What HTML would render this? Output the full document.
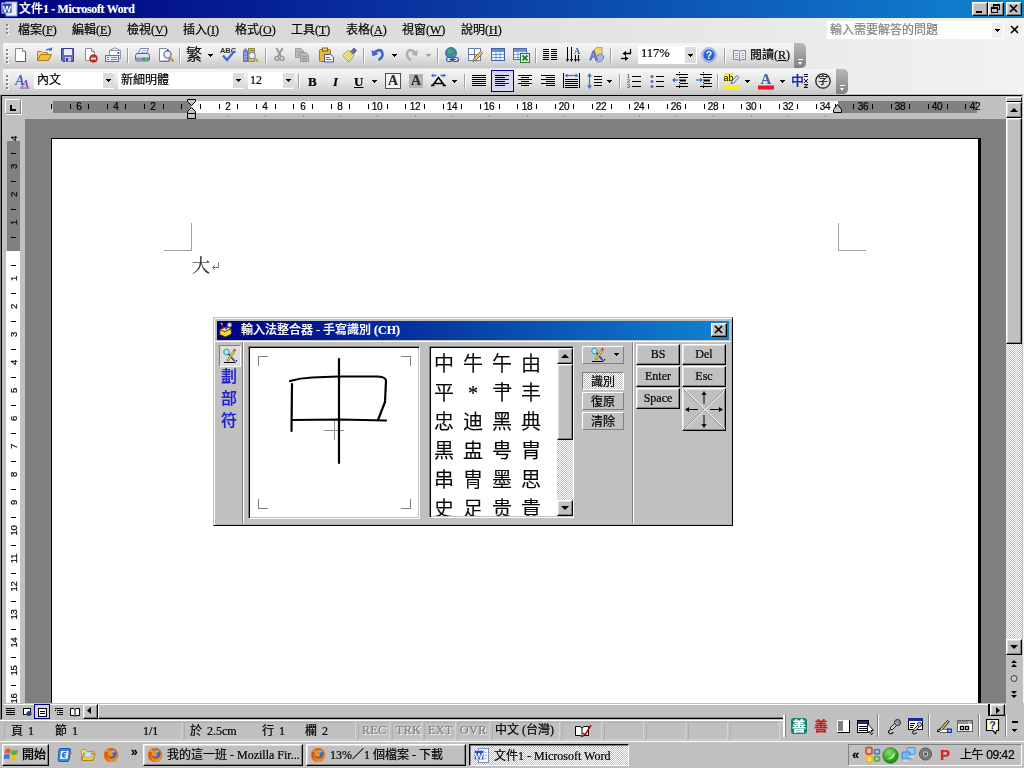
<!DOCTYPE html><html><head><meta charset="utf-8"><title>文件1 - Microsoft Word</title><style>
*{box-sizing:border-box}
html,body{margin:0;padding:0}
body{width:1024px;height:768px;position:relative;overflow:hidden;background:#c0c0c0;font-family:'Liberation Serif','Noto Sans CJK SC',sans-serif;font-size:12px;color:#000;line-height:1}
#root{position:absolute;left:0;top:0;width:1024px;height:768px;overflow:hidden;will-change:transform}
.a{position:absolute}
.t{position:absolute;white-space:nowrap;line-height:1;-webkit-text-stroke-width:0.2px}
.raised{position:absolute;background:#c0c0c0;border:1px solid;border-color:#fff #000 #000 #fff;box-shadow:inset -1px -1px 0 #808080,inset 1px 1px 0 #dfdfdf}
.sunk{position:absolute;border:1px solid;border-color:#808080 #fff #fff #808080}
.sep{position:absolute;width:2px;border-left:1px solid #a0a0a0;border-right:1px solid #fff}
.arr{position:absolute;width:0;height:0;border-left:2.5px solid transparent;border-right:2.5px solid transparent;border-top:3px solid #000}
svg{position:absolute;overflow:visible}
.dd{position:absolute;width:5px;height:1px;background:#000}
.dd::before{content:'';position:absolute;left:1px;top:1px;width:3px;height:1px;background:inherit}
.dd::after{content:'';position:absolute;left:2px;top:2px;width:1px;height:1px;background:inherit}
</style></head><body><div id="root">
<div class="a" style="left:0;top:0;width:1024px;height:18px;background:linear-gradient(90deg,#000080 0%,#0a3aa4 45%,#1084d0 100%)"></div>
<svg style="left:2px;top:1px" width="16" height="16"><rect x="4" y="1" width="11" height="14" fill="#e8eefc" stroke="#7f9ad8"/><rect x="0" y="2" width="10" height="10" fill="#2a4db0" stroke="#c8d4f4"/><text x="5" y="10.5" font-size="9" font-weight="bold" fill="#fff" text-anchor="middle" font-family="Liberation Sans,sans-serif">W</text></svg>
<div class="t" style="left:19px;top:3px;color:#fff;font-weight:bold;font-size:12px;letter-spacing:-0.35px"><span style="font-weight:500;letter-spacing:0">文件</span>1 - Microsoft Word</div>
<div class="raised" style="left:972px;top:2px;width:16px;height:14px"></div>
<svg style="left:972px;top:2px" width="16" height="14"><rect x="4" y="9" width="6" height="2" fill="#000"/></svg>
<div class="raised" style="left:988px;top:2px;width:16px;height:14px"></div>
<svg style="left:988px;top:2px" width="16" height="14"><rect x="5.5" y="2.5" width="6" height="5" fill="none" stroke="#000"/><rect x="5" y="2" width="7" height="2" fill="#000"/><rect x="3.5" y="5.5" width="6" height="5" fill="#c0c0c0" stroke="#000"/><rect x="3" y="5" width="7" height="2" fill="#000"/></svg>
<div class="raised" style="left:1006px;top:2px;width:16px;height:14px"></div>
<svg style="left:1006px;top:2px" width="16" height="14"><path d="M4 3 L11 10 M11 3 L4 10" stroke="#000" stroke-width="1.7"/></svg>
<div class="a" style="left:0;top:18px;width:1024px;height:25px;background:linear-gradient(90deg,#d0d0d0 0%,#e4e4e4 60%,#f2f2f2 100%)"></div>
<div class="a" style="left:7px;top:25px;width:2px;height:2px;background:#fff"></div>
<div class="a" style="left:6px;top:24px;width:2px;height:2px;background:#888"></div>
<div class="a" style="left:7px;top:29px;width:2px;height:2px;background:#fff"></div>
<div class="a" style="left:6px;top:28px;width:2px;height:2px;background:#888"></div>
<div class="a" style="left:7px;top:33px;width:2px;height:2px;background:#fff"></div>
<div class="a" style="left:6px;top:32px;width:2px;height:2px;background:#888"></div>
<div class="t" style="left:18px;top:24px;font-size:12px">檔案(<u>F</u>)</div>
<div class="t" style="left:72px;top:24px;font-size:12px">編輯(<u>E</u>)</div>
<div class="t" style="left:127px;top:24px;font-size:12px">檢視(<u>V</u>)</div>
<div class="t" style="left:183px;top:24px;font-size:12px">插入(<u>I</u>)</div>
<div class="t" style="left:235px;top:24px;font-size:12px">格式(<u>O</u>)</div>
<div class="t" style="left:291px;top:24px;font-size:12px">工具(<u>T</u>)</div>
<div class="t" style="left:346px;top:24px;font-size:12px">表格(<u>A</u>)</div>
<div class="t" style="left:402px;top:24px;font-size:12px">視窗(<u>W</u>)</div>
<div class="t" style="left:461px;top:24px;font-size:12px">說明(<u>H</u>)</div>
<div class="a" style="left:827px;top:21px;width:177px;height:18px;background:#fff"></div>
<div class="t" style="left:830px;top:24px;color:#808080;font-size:12px">輸入需要解答的問題</div>
<div class="a" style="left:992px;top:22px;width:11px;height:16px;background:#f0f0f0"></div>
<div class="dd" style="left:995px;top:29px"></div>
<svg style="left:1010px;top:25px" width="10" height="10"><path d="M1 1 L8 8 M8 1 L1 8" stroke="#000" stroke-width="1.6"/></svg>
<div class="a" style="left:0;top:43px;width:1024px;height:26px;background:linear-gradient(90deg,#d0d0d0 0%,#e4e4e4 60%,#f2f2f2 100%)"></div>
<div class="a" style="left:3px;top:43px;width:803px;height:25px;border-radius:0 4px 4px 0;background:linear-gradient(180deg,#f6f6f6 0%,#e6e6e6 50%,#c8c8c8 100%)"></div>
<div class="a" style="left:794px;top:43px;width:12px;height:25px;border-radius:0 5px 5px 0;background:linear-gradient(180deg,#b8b8b8,#808080)"></div>
<div class="a" style="left:798px;top:59px;width:5px;height:1px;background:#fff"></div>
<div class="arr" style="left:798px;top:62px;border-top-color:#fff;border-width:3px 3px 0 3px;border-left-width:2.5px;border-right-width:2.5px"></div>
<div class="a" style="left:7px;top:50px;width:2px;height:2px;background:#fff"></div>
<div class="a" style="left:6px;top:49px;width:2px;height:2px;background:#888"></div>
<div class="a" style="left:7px;top:54px;width:2px;height:2px;background:#fff"></div>
<div class="a" style="left:6px;top:53px;width:2px;height:2px;background:#888"></div>
<div class="a" style="left:7px;top:58px;width:2px;height:2px;background:#fff"></div>
<div class="a" style="left:6px;top:57px;width:2px;height:2px;background:#888"></div>
<div class="a" style="left:7px;top:62px;width:2px;height:2px;background:#fff"></div>
<div class="a" style="left:6px;top:61px;width:2px;height:2px;background:#888"></div>
<div class="a" style="left:0;top:69px;width:1024px;height:26px;background:linear-gradient(90deg,#d0d0d0 0%,#e4e4e4 60%,#f2f2f2 100%)"></div>
<div class="a" style="left:3px;top:69px;width:845px;height:25px;border-radius:0 4px 4px 0;background:linear-gradient(180deg,#f6f6f6 0%,#e6e6e6 50%,#c8c8c8 100%)"></div>
<div class="a" style="left:836px;top:69px;width:12px;height:25px;border-radius:0 5px 5px 0;background:linear-gradient(180deg,#b8b8b8,#808080)"></div>
<div class="a" style="left:840px;top:85px;width:5px;height:1px;background:#fff"></div>
<div class="arr" style="left:840px;top:88px;border-top-color:#fff;border-width:3px 3px 0 3px;border-left-width:2.5px;border-right-width:2.5px"></div>
<div class="a" style="left:7px;top:76px;width:2px;height:2px;background:#fff"></div>
<div class="a" style="left:6px;top:75px;width:2px;height:2px;background:#888"></div>
<div class="a" style="left:7px;top:80px;width:2px;height:2px;background:#fff"></div>
<div class="a" style="left:6px;top:79px;width:2px;height:2px;background:#888"></div>
<div class="a" style="left:7px;top:84px;width:2px;height:2px;background:#fff"></div>
<div class="a" style="left:6px;top:83px;width:2px;height:2px;background:#888"></div>
<div class="a" style="left:7px;top:88px;width:2px;height:2px;background:#fff"></div>
<div class="a" style="left:6px;top:87px;width:2px;height:2px;background:#888"></div>
<div class="a" style="left:0;top:94px;width:1024px;height:2px;background:#c0c0c0"></div>
<svg style="left:13px;top:47px" width="16" height="16"><path d="M2.500 1.500 H9.500 L12.500 4.500 V14.500 H2.500 Z" fill="#fff" stroke="#8c8c9c"/><path d="M9.500 1.500 V4.500 H12.500" fill="#d8dcec" stroke="#8c8c9c"/><path d="M3 14.500 H12.500 V5" fill="none" stroke="#5a5a6a"/></svg>
<svg style="left:36px;top:47px" width="18" height="16"><path d="M1.500 13.500 V4.500 H5.500 L6.500 5.500 H11.500 V7.500" fill="#f4d470" stroke="#b08820"/><path d="M1.500 13.500 L4.500 7.500 H15.500 L12.500 13.500 Z" fill="#f0c040" stroke="#a87c18"/><path d="M10 3.500 Q13 0.500 15.500 3 M15.500 3 L15.500 0.500 M15.500 3 L13 3.200" fill="none" stroke="#3a64c8" stroke-width="1.200"/></svg>
<svg style="left:60px;top:47px" width="16" height="16"><path d="M1.500 1.500 H13.500 V14.500 H3 L1.500 13 Z" fill="#6868c8" stroke="#38389c"/><rect x="4" y="2" width="8" height="6" fill="#e8ecfc"/><rect x="5" y="10" width="6" height="4.500" fill="#c0c4e0"/><rect x="6" y="11" width="2" height="3" fill="#38389c"/></svg>
<svg style="left:83px;top:47px" width="16" height="16"><path d="M2.500 1.500 H8.500 L11.500 4.500 V13.500 H2.500 Z" fill="#fff" stroke="#8c8c9c"/><path d="M8.500 1.500 V4.500 H11.500" fill="#d8dcec" stroke="#8c8c9c"/><circle cx="10.500" cy="11.500" r="3.800" fill="#d83018" stroke="#a01808" stroke-width="0.800"/><rect x="8" y="10.700" width="5" height="1.700" fill="#fff"/></svg>
<svg style="left:105px;top:47px" width="18" height="16"><path d="M4.500 7 V3.500 L10 0.800 L15.500 3.500 V11.500 H12" fill="#f4f6fc" stroke="#8890b0"/><rect x="4.500" y="3.500" width="11" height="5" fill="#fcfcff" stroke="#9098b8"/><rect x="12.500" y="5" width="1.800" height="1.800" fill="#404868"/><rect x="0.500" y="8.500" width="13" height="6" fill="#e4e8f4" stroke="#6070a0"/><path d="M2 10.500 H4 M2 12.500 H4 M6 10.500 H12 M6 12.500 H12" stroke="#7888c0"/></svg>
<div class="sep" style="left:127px;top:48px;height:15px"></div>
<svg style="left:134px;top:47px" width="17" height="16"><path d="M4 7 L6.500 1.500 H14.500 L12.500 7" fill="#fcfcff" stroke="#7880b0"/><path d="M7.500 3.500 H12.500 M7 5.500 H12" stroke="#a8b0d0"/><path d="M1.500 8.500 Q1.500 6.500 4 6.500 H13 Q15.500 6.500 15.500 8.500 V12.500 Q15.500 14 13.500 14 H3.500 Q1.500 14 1.500 12.500 Z" fill="#dde2ee" stroke="#586890"/><path d="M2 10.500 H15 V12.500 Q15 13.500 13.500 13.500 H3.500 Q2 13.500 2 12.500 Z" fill="#8c98b8"/><rect x="8.500" y="10.800" width="6" height="2.400" rx="0.800" fill="#2c9c48"/><rect x="11.500" y="11.300" width="1.500" height="1.200" fill="#b0f0a0"/></svg>
<svg style="left:158px;top:47px" width="17" height="16"><path d="M1.500 1.500 H8.500 L11.500 4.500 V14.500 H1.500 Z" fill="#fcfcff" stroke="#8088b0"/><path d="M2 14 H11 V5" fill="none" stroke="#5860a0" stroke-width="0.800"/><circle cx="9.500" cy="7.500" r="3.600" fill="#e8f0f8" stroke="#70788c" stroke-width="1.300"/><circle cx="9.800" cy="3.300" r="1" fill="#404860"/><path d="M12 10.500 L15 13.800" stroke="#d09038" stroke-width="2.400" stroke-linecap="round"/></svg>
<div class="sep" style="left:179px;top:48px;height:15px"></div>
<div class="t" style="left:186px;top:47px;font-size:16px;color:#101010">繁</div>
<div class="dd" style="left:208px;top:54px"></div>
<svg style="left:219px;top:46px" width="18" height="17"><text x="9" y="6.500" font-size="7.500" font-weight="bold" text-anchor="middle" font-family="Liberation Sans,sans-serif" fill="#303030">ABC</text><path d="M4 9.500 L8 14 L15.500 5" fill="none" stroke="#3c6cd0" stroke-width="2.400"/></svg>
<svg style="left:243px;top:47px" width="16" height="16"><path d="M0.500 4 L2.500 1.500 L4.500 4 V14.500 H0.500 Z" fill="#8088e0" stroke="#5058b0" stroke-width="0.800"/><path d="M1 6.500 H4 M1 9.500 H4 M1 12 H4" stroke="#a8b0f0"/><rect x="5.500" y="1.500" width="6" height="13" fill="#d0c860" stroke="#807828" stroke-width="0.800"/><path d="M6.500 3.500 H10.500" stroke="#807828"/><circle cx="9" cy="8.500" r="3.200" fill="#f0f4fc" stroke="#8890a8" stroke-width="1.200"/><path d="M11.500 11 L14.500 14" stroke="#c8a050" stroke-width="2.200" stroke-linecap="round"/></svg>
<div class="sep" style="left:265px;top:48px;height:15px"></div>
<svg style="left:274px;top:47px" width="12" height="16"><path d="M2.500 1 L7 9.500 M8.500 1 L4 9.500" stroke="#9c9c9c" stroke-width="2" fill="none"/><circle cx="3" cy="11.500" r="2" fill="none" stroke="#9c9c9c" stroke-width="1.600"/><circle cx="8" cy="11.500" r="2" fill="none" stroke="#9c9c9c" stroke-width="1.600"/></svg>
<svg style="left:294px;top:47px" width="16" height="16"><path d="M1.500 1.500 H7 L9.500 4 V10.500 H1.500 Z" fill="#bcbcbc" stroke="#a0a0a0"/><path d="M3 4.500 H7 M3 6.500 H8 M3 8.500 H6" stroke="#a4a4a4"/><path d="M6.500 5.500 H12 L14.500 8 V14.500 H6.500 Z" fill="#b8b8b8" stroke="#9c9c9c"/><path d="M8 9.500 H13 M8 11.500 H13 M8 13 H13" stroke="#9a9a9a"/></svg>
<svg style="left:318px;top:47px" width="17" height="16"><rect x="1.500" y="2.500" width="11" height="12" rx="1" fill="#ecb838" stroke="#a87818"/><rect x="4.500" y="1" width="5" height="3" fill="#e8d890" stroke="#806010"/><path d="M6.500 7.500 H12.500 L15.500 10 V15 H6.500 Z" fill="#f8fafc" stroke="#4858a0"/><path d="M8 10.500 H12 M8 12.500 H13.500" stroke="#6078c0"/></svg>
<svg style="left:341px;top:47px" width="17" height="16"><path d="M9 5.500 L13 1 L15.500 3.500 L11.500 8 Z" fill="#7068b0" stroke="#484088" stroke-width="0.800"/><path d="M1.500 8.500 L7.500 3 L13 8.500 L8 15 Z" fill="#ece488" stroke="#a09838" stroke-width="0.900"/><path d="M3.500 10.500 L9.500 5 M5.500 12.500 L11 7" stroke="#c8bc58" stroke-width="0.800"/></svg>
<div class="sep" style="left:363px;top:48px;height:15px"></div>
<svg style="left:371px;top:47px" width="14" height="16"><path d="M3 6 Q10 0 11.500 6.500 Q12 10.500 7.500 13" fill="none" stroke="#3a68d8" stroke-width="2.600"/><path d="M0.500 3 L1.500 9.500 L7.500 7 Z" fill="#3a68d8"/></svg>
<div class="dd" style="left:392px;top:54px"></div>
<svg style="left:405px;top:47px" width="14" height="16"><path d="M10.500 6 Q3.500 0 2 6.500 Q1.500 10.500 6 13" fill="none" stroke="#b0b0b0" stroke-width="2.600"/><path d="M13 3 L12 9.500 L6 7 Z" fill="#b0b0b0"/></svg>
<div class="dd" style="left:426px;top:54px;background:#a0a0a0"></div>
<div class="sep" style="left:437px;top:48px;height:15px"></div>
<svg style="left:444px;top:47px" width="17" height="16"><circle cx="7" cy="6" r="5.500" fill="#3c88b8" stroke="#28608c" stroke-width="0.800"/><path d="M3 4 Q5 1 8 2.500 Q9 5 6.500 6.500 Q4 8 3 4 Z M8 8 Q10 6 11.500 8 Q10 10.500 8 8 Z" fill="#48b060"/><rect x="2.500" y="10.500" width="6" height="4" rx="2" fill="#e8f0fc" stroke="#3858a0" stroke-width="1.200"/><rect x="8.500" y="10.500" width="6" height="4" rx="2" fill="#e8f0fc" stroke="#3858a0" stroke-width="1.200"/><path d="M5.500 12.500 H11.500" stroke="#203878" stroke-width="1.400"/></svg>
<svg style="left:467px;top:47px" width="17" height="16"><rect x="1.500" y="1.500" width="12" height="12" fill="#fff" stroke="#6878b0"/><path d="M1.500 7.500 H13.500 M7.500 1.500 V13.500" stroke="#6878b0"/><path d="M6 14.500 L7 11 L13.500 4.500 L15.500 6.500 L9 13 Z" fill="#ecc050" stroke="#906820"/></svg>
<svg style="left:491px;top:47px" width="16" height="16"><rect x="0.500" y="1.500" width="13" height="12" fill="#f4f8ff" stroke="#4060a8"/><rect x="1" y="2" width="12" height="2" fill="#5c8cdc"/><path d="M1 4.500 H13 M1 7.500 H13 M1 10.500 H13 M5 4.500 V13 M9 4.500 V13" stroke="#6c94d8"/></svg>
<svg style="left:513px;top:47px" width="18" height="17"><rect x="0.500" y="1.500" width="13" height="11" fill="#f4f8ff" stroke="#5070b0"/><rect x="1" y="2" width="12" height="2" fill="#6890d8"/><path d="M1 4.500 H13 M1 7.500 H13 M1 10.500 H13 M5 4.500 V12 M9 4.500 V12" stroke="#7c9cd8"/><rect x="7.500" y="6.500" width="9" height="9" fill="#e4f0e0" stroke="#2c7838"/><path d="M9.500 8.500 L14.500 13.500 M14.500 8.500 L9.500 13.500" stroke="#208030" stroke-width="1.800"/></svg>
<div class="sep" style="left:535px;top:48px;height:15px"></div>
<svg style="left:543px;top:47px" width="14" height="16"><path d="M0 3 H6 M0 5 H6 M0 7 H6 M0 9 H6 M0 11 H6 M0 13 H6 M8 3 H14 M8 5 H14 M8 7 H14 M8 9 H14 M8 11 H14 M8 13 H14" stroke="#000" stroke-width="1" transform="translate(0,-0.500)"/></svg>
<svg style="left:565px;top:47px" width="16" height="16"><path d="M2.500 0 V13 M6.500 0 V13 M10.500 8 V13 M13.500 8 V13" stroke="#000" stroke-width="1"/><path d="M1 12 H4 L2.500 15 Z M5 12 H8 L6.500 15 Z M9 12 H12 L10.500 15 Z M12 12 H15 L13.500 15 Z" fill="#000"/><text x="12" y="7" font-size="8.500" font-weight="bold" text-anchor="middle" font-family="Liberation Serif,serif" fill="#3858b0">A</text></svg>
<svg style="left:588px;top:47px" width="17" height="16"><path d="M6 3 L9 0.500 H14 V7 L11 9.500 H6 Z" fill="#f0d868" stroke="#b89830" stroke-width="0.800"/><ellipse cx="11.500" cy="11" rx="4.500" ry="3.500" fill="#a8b8e0" stroke="#6878b0" stroke-width="0.800" transform="rotate(-30 11.500 11)"/><text x="5.500" y="12.500" font-size="12" font-weight="bold" text-anchor="middle" font-family="Liberation Sans,sans-serif" fill="#7080d0" stroke="#4858a8" stroke-width="0.400">A</text></svg>
<div class="sep" style="left:610px;top:48px;height:15px"></div>
<svg style="left:620px;top:47px" width="14" height="16"><path d="M10.500 2 V6.500 H4" fill="none" stroke="#000" stroke-width="1.300"/><path d="M2.500 6.500 L6 4 V9 Z" fill="#000"/><path d="M1 11.500 H6" fill="none" stroke="#000" stroke-width="1.300"/><path d="M8.500 11.500 L5 9 V14 Z" fill="#000"/></svg>
<div class="a" style="left:638px;top:46px;width:59px;height:18px;background:#fff"></div>
<div class="a" style="left:685px;top:47px;width:11px;height:16px;background:#dcdcdc"></div>
<div class="t" style="left:641px;top:47px;font-size:12.500px">117%</div>
<div class="dd" style="left:688px;top:54px"></div>
<svg style="left:701px;top:47px" width="16" height="16"><circle cx="8" cy="8" r="6.300" fill="#2c64d0" stroke="#e8f0ff" stroke-width="1"/><circle cx="8" cy="8" r="7.200" fill="none" stroke="#5c84d8" stroke-width="0.800"/><text x="8" y="11.800" font-size="10.500" font-weight="bold" text-anchor="middle" font-family="Liberation Sans,sans-serif" fill="#fff">?</text></svg>
<div class="sep" style="left:724px;top:48px;height:15px"></div>
<svg style="left:732px;top:47px" width="16" height="16"><path d="M1.500 3.500 H6 L7.500 4.500 L9 3.500 H13.500 V12.500 H9 L7.500 13.800 L6 12.500 H1.500 Z" fill="#eef0f6" stroke="#8088a0"/><path d="M7.500 4.500 V13.500" stroke="#8088a0"/><path d="M3 6.500 H6 M3 8.500 H6 M3 10.500 H6 M9.500 6.500 H12 M9.500 8.500 H12 M9.500 10.500 H12" stroke="#a0a8c0"/></svg>
<div class="t" style="left:750px;top:49px;font-size:12px">閱讀(<u>R</u>)</div>
<svg style="left:14px;top:73px" width="16" height="16"><text x="6" y="12" font-size="14" font-style="italic" font-weight="bold" text-anchor="middle" font-family="Liberation Serif,serif" fill="#4868b8">A</text><text x="11.500" y="14" font-size="11" font-style="italic" font-weight="bold" text-anchor="middle" font-family="Liberation Serif,serif" fill="#8048a8">A</text><path d="M6 15 H15.500" stroke="#8048a8"/></svg>
<div class="a" style="left:34px;top:72px;width:80px;height:17px;background:#fff"></div>
<div class="a" style="left:103px;top:73px;width:11px;height:15px;background:#dcdcdc"></div>
<div class="dd" style="left:106px;top:79px"></div>
<div class="t" style="left:37px;top:74px;font-size:12px">內文</div>
<div class="a" style="left:118px;top:72px;width:126px;height:17px;background:#fff"></div>
<div class="a" style="left:233px;top:73px;width:11px;height:15px;background:#dcdcdc"></div>
<div class="dd" style="left:236px;top:79px"></div>
<div class="t" style="left:121px;top:74px;font-size:12px">新細明體</div>
<div class="a" style="left:248px;top:72px;width:46px;height:17px;background:#fff"></div>
<div class="a" style="left:283px;top:73px;width:11px;height:15px;background:#dcdcdc"></div>
<div class="dd" style="left:286px;top:79px"></div>
<div class="t" style="left:250px;top:74px;font-size:12px">12</div>
<div class="sep" style="left:298px;top:74px;height:15px"></div>
<div class="t" style="left:308px;top:75px;font-size:13px;font-weight:bold">B</div>
<div class="t" style="left:333px;top:75px;font-size:13px;font-weight:bold;font-style:italic">I</div>
<div class="t" style="left:354px;top:75px;font-size:13px;font-weight:bold;text-decoration:underline">U</div>
<div class="dd" style="left:372px;top:80px"></div>
<div class="a" style="left:385px;top:73px;width:16px;height:16px;border:1px solid #505050;background:#f4f4f4"></div>
<div class="t" style="left:385px;top:74px;width:16px;text-align:center;font-size:14px;font-weight:bold;color:#303030">A</div>
<div class="a" style="left:409px;top:74px;width:14px;height:14px;background:#b4b4b4"></div>
<div class="t" style="left:408px;top:74px;width:16px;text-align:center;font-size:14px;font-weight:bold;color:#303030">A</div>
<svg style="left:430px;top:73px" width="18" height="16"><path d="M2.500 12.500 L8.500 4.500 L14.500 12.500 M5 10.500 H12" fill="none" stroke="#000" stroke-width="1.500"/><path d="M1 12.500 H4.500 M12.500 12.500 H16" stroke="#000" stroke-width="1.300"/><path d="M3 2.500 H6.500 M10.500 2.500 H14" stroke="#2868e0" stroke-width="1.300"/><path d="M1 2.500 L3.500 0.500 V4.500 Z M16 2.500 L13.500 0.500 V4.500 Z" fill="#2868e0"/></svg>
<div class="dd" style="left:452px;top:80px"></div>
<div class="sep" style="left:464px;top:74px;height:15px"></div>
<svg style="left:472px;top:73px" width="16" height="14"><path d="M0 2.5 H14 M0 4.5 H14 M0 6.5 H14 M0 8.5 H14 M0 10.5 H14 M0 12.5 H14 " stroke="#000" stroke-width="1"/></svg>
<div class="a" style="left:491px;top:70px;width:23px;height:22px;border:1px solid #000080;background:#d6d6f0"></div>
<svg style="left:495px;top:73px" width="16" height="14"><path d="M0 2.5 H14 M0 4.5 H10 M0 6.5 H14 M0 8.5 H10 M0 10.5 H14 M0 12.5 H10 " stroke="#000" stroke-width="1"/></svg>
<svg style="left:518px;top:73px" width="16" height="14"><path d="M0 2.5 H14 M3 4.5 H11 M0 6.5 H14 M3 8.5 H11 M0 10.5 H14 M3 12.5 H11 " stroke="#000" stroke-width="1"/></svg>
<svg style="left:541px;top:73px" width="16" height="14"><path d="M0 2.5 H14 M5 4.5 H14 M0 6.5 H14 M5 8.5 H14 M0 10.5 H14 M5 12.5 H14 " stroke="#000" stroke-width="1"/></svg>
<svg style="left:563px;top:72px" width="17" height="17"><path d="M0.500 1 V16 M16.500 1 V16" stroke="#000"/><path d="M3 3.500 H14" stroke="#4070c8" stroke-width="1.200"/><path d="M1.500 3.500 L4.500 1.500 V5.500 Z M15.500 3.500 L12.500 1.500 V5.500 Z" fill="#4070c8"/><path d="M2 7.500 H15 M2 9.500 H15 M2 11.500 H15 M2 13.500 H15 M2 15.500 H15" stroke="#000"/></svg>
<svg style="left:586px;top:72px" width="17" height="17"><path d="M3.500 3 V15" stroke="#4070c8" stroke-width="1.200"/><path d="M3.500 1 L6 4.500 H1 Z M3.500 17 L6 13.500 H1 Z" fill="#4070c8"/><path d="M8 4.500 H16 M8 7.500 H16 M8 10.500 H16 M8 13.500 H16" stroke="#000"/></svg>
<div class="dd" style="left:607px;top:80px"></div>
<div class="sep" style="left:619px;top:74px;height:15px"></div>
<svg style="left:626px;top:73px" width="16" height="16"><text x="2.500" y="5" font-size="5.500" font-weight="bold" text-anchor="middle" font-family="Liberation Sans,sans-serif" fill="#4060b0">1</text><text x="2.500" y="10" font-size="5.500" font-weight="bold" text-anchor="middle" font-family="Liberation Sans,sans-serif" fill="#4060b0">2</text><text x="2.500" y="15" font-size="5.500" font-weight="bold" text-anchor="middle" font-family="Liberation Sans,sans-serif" fill="#4060b0">3</text><path d="M6 3.500 H15 M6 8.500 H15 M6 13.500 H15" stroke="#000" stroke-width="1.200"/></svg>
<svg style="left:650px;top:73px" width="16" height="16"><circle cx="2" cy="3.500" r="1.500" fill="#5868a0"/><circle cx="2" cy="8.500" r="1.500" fill="#5868a0"/><circle cx="2" cy="13.500" r="1.500" fill="#5868a0"/><path d="M6 3.500 H14 M6 8.500 H14 M6 13.500 H14" stroke="#000" stroke-width="1.200"/></svg>
<svg style="left:672px;top:72px" width="17" height="17"><path d="M1 8 H6" stroke="#4070c8" stroke-width="1.300"/><path d="M0 8 L3 5.500 V10.500 Z" fill="#4070c8"/><path d="M4 2.500 H16 M8 5.500 H16 M8 11.500 H16 M4 14.500 H16" stroke="#000" stroke-width="1"/><path d="M8 8.500 H14" stroke="#000" stroke-width="2"/><path d="M7.500 0 V17" stroke="#000" stroke-dasharray="1 1.500"/></svg>
<svg style="left:696px;top:72px" width="17" height="17"><path d="M0 8 H5" stroke="#4070c8" stroke-width="1.300"/><path d="M7 8 L4 5.500 V10.500 Z" fill="#4070c8"/><path d="M4 2.500 H16 M8 5.500 H16 M8 11.500 H16 M4 14.500 H16" stroke="#000" stroke-width="1"/><path d="M8 8.500 H14" stroke="#000" stroke-width="2"/><path d="M7.500 0 V17" stroke="#000" stroke-dasharray="1 1.500"/></svg>
<div class="sep" style="left:717px;top:74px;height:15px"></div>
<svg style="left:723px;top:72px" width="18" height="18"><rect x="1" y="13" width="16" height="4" fill="#f8f020"/><rect x="1" y="1" width="9" height="9" fill="#f8f040"/><text x="5.500" y="9" font-size="9" text-anchor="middle" font-family="Liberation Sans,sans-serif" fill="#000">ab</text><path d="M8 11.500 L9 9 L14 3.500 L16 5.500 L10.500 11 Z" fill="#e0e8f8" stroke="#5068a0"/></svg>
<div class="dd" style="left:745px;top:80px"></div>
<svg style="left:757px;top:72px" width="18" height="18"><text x="9" y="12" font-size="15" font-weight="bold" text-anchor="middle" font-family="Liberation Serif,serif" fill="#4060a8">A</text><rect x="1" y="13.500" width="16" height="4" fill="#e81828"/></svg>
<div class="dd" style="left:780px;top:80px"></div>
<div class="t" style="left:791px;top:74px;font-size:13px;font-weight:500;color:#1428a8;font-family:'Liberation Sans','Noto Sans CJK SC',sans-serif">中</div>
<svg style="left:803px;top:73px" width="6" height="16"><path d="M1 1.500 H5 M1 3.500 H5 M1 6 L5 10 M5 6 L1 10 M1 11.500 H5 L1 14.500 H5" fill="none" stroke="#000" stroke-width="0.900"/></svg>
<svg style="left:815px;top:73px" width="16" height="16"><circle cx="8" cy="8" r="7.200" fill="none" stroke="#202020" stroke-width="1.300"/></svg>
<div class="t" style="left:818px;top:76px;font-size:10px">字</div>
<div class="a" style="left:0;top:95px;width:1024px;height:625px;background:#c0c0c0"></div>
<div class="a" style="left:0;top:95px;width:1px;height:625px;background:#808080"></div>
<div class="a" style="left:1px;top:95px;width:1px;height:624px;background:#000"></div>
<div class="a" style="left:1px;top:95px;width:1021px;height:1px;background:#000"></div>
<div class="a" style="left:1023px;top:95px;width:1px;height:625px;background:#f4f4f4"></div>
<div class="a" style="left:25px;top:119px;width:981px;height:584px;background:#808080"></div>
<div class="a" style="left:51px;top:138px;width:930px;height:565px;background:#fff;border-top:1px solid #000;border-right:3px solid #000;border-left:1px solid #000"></div>
<!--DOC-->
<div class="a" style="left:5px;top:99px;width:16px;height:15px;border:1px solid;border-color:#fff #808080 #808080 #fff;background:#c4c4c4;box-shadow:1px 1px 0 #fff"></div>
<div class="a" style="left:10px;top:105px;width:2px;height:6px;background:#000"></div><div class="a" style="left:10px;top:109px;width:6px;height:2px;background:#000"></div>
<div class="a" style="left:53px;top:101px;width:924px;height:12px;background:#808080"></div>
<div class="a" style="left:191px;top:101px;width:647px;height:12px;background:#fff"></div>
<div class="a" style="left:51px;top:104px;width:1px;height:5px;background:#000"></div>
<div class="a" style="left:70px;top:104px;width:1px;height:5px;background:#000"></div>
<div class="a" style="left:88px;top:104px;width:1px;height:5px;background:#000"></div>
<div class="t" style="left:69px;top:101px;width:20px;text-align:center;font-family:'Liberation Sans','Noto Sans CJK SC',sans-serif;font-size:10px;letter-spacing:-0.3px;line-height:12px">6</div>
<div class="a" style="left:107px;top:104px;width:1px;height:5px;background:#000"></div>
<div class="a" style="left:125px;top:104px;width:1px;height:5px;background:#000"></div>
<div class="t" style="left:106px;top:101px;width:20px;text-align:center;font-family:'Liberation Sans','Noto Sans CJK SC',sans-serif;font-size:10px;letter-spacing:-0.3px;line-height:12px">4</div>
<div class="a" style="left:144px;top:104px;width:1px;height:5px;background:#000"></div>
<div class="a" style="left:163px;top:104px;width:1px;height:5px;background:#000"></div>
<div class="t" style="left:143px;top:101px;width:20px;text-align:center;font-family:'Liberation Sans','Noto Sans CJK SC',sans-serif;font-size:10px;letter-spacing:-0.3px;line-height:12px">2</div>
<div class="a" style="left:181px;top:104px;width:1px;height:5px;background:#000"></div>
<div class="a" style="left:200px;top:104px;width:1px;height:5px;background:#000"></div>
<div class="a" style="left:219px;top:104px;width:1px;height:5px;background:#000"></div>
<div class="a" style="left:237px;top:104px;width:1px;height:5px;background:#000"></div>
<div class="t" style="left:218px;top:101px;width:20px;text-align:center;font-family:'Liberation Sans','Noto Sans CJK SC',sans-serif;font-size:10px;letter-spacing:-0.3px;line-height:12px">2</div>
<div class="a" style="left:228px;top:115px;width:1px;height:2px;background:#909090"></div>
<div class="a" style="left:256px;top:104px;width:1px;height:5px;background:#000"></div>
<div class="a" style="left:275px;top:104px;width:1px;height:5px;background:#000"></div>
<div class="t" style="left:255px;top:101px;width:20px;text-align:center;font-family:'Liberation Sans','Noto Sans CJK SC',sans-serif;font-size:10px;letter-spacing:-0.3px;line-height:12px">4</div>
<div class="a" style="left:265px;top:115px;width:1px;height:2px;background:#909090"></div>
<div class="a" style="left:293px;top:104px;width:1px;height:5px;background:#000"></div>
<div class="a" style="left:312px;top:104px;width:1px;height:5px;background:#000"></div>
<div class="t" style="left:293px;top:101px;width:20px;text-align:center;font-family:'Liberation Sans','Noto Sans CJK SC',sans-serif;font-size:10px;letter-spacing:-0.3px;line-height:12px">6</div>
<div class="a" style="left:303px;top:115px;width:1px;height:2px;background:#909090"></div>
<div class="a" style="left:331px;top:104px;width:1px;height:5px;background:#000"></div>
<div class="a" style="left:349px;top:104px;width:1px;height:5px;background:#000"></div>
<div class="t" style="left:330px;top:101px;width:20px;text-align:center;font-family:'Liberation Sans','Noto Sans CJK SC',sans-serif;font-size:10px;letter-spacing:-0.3px;line-height:12px">8</div>
<div class="a" style="left:340px;top:115px;width:1px;height:2px;background:#909090"></div>
<div class="a" style="left:368px;top:104px;width:1px;height:5px;background:#000"></div>
<div class="a" style="left:387px;top:104px;width:1px;height:5px;background:#000"></div>
<div class="t" style="left:367px;top:101px;width:20px;text-align:center;font-family:'Liberation Sans','Noto Sans CJK SC',sans-serif;font-size:10px;letter-spacing:-0.3px;line-height:12px">10</div>
<div class="a" style="left:377px;top:115px;width:1px;height:2px;background:#909090"></div>
<div class="a" style="left:405px;top:104px;width:1px;height:5px;background:#000"></div>
<div class="a" style="left:424px;top:104px;width:1px;height:5px;background:#000"></div>
<div class="t" style="left:405px;top:101px;width:20px;text-align:center;font-family:'Liberation Sans','Noto Sans CJK SC',sans-serif;font-size:10px;letter-spacing:-0.3px;line-height:12px">12</div>
<div class="a" style="left:415px;top:115px;width:1px;height:2px;background:#909090"></div>
<div class="a" style="left:443px;top:104px;width:1px;height:5px;background:#000"></div>
<div class="a" style="left:461px;top:104px;width:1px;height:5px;background:#000"></div>
<div class="t" style="left:442px;top:101px;width:20px;text-align:center;font-family:'Liberation Sans','Noto Sans CJK SC',sans-serif;font-size:10px;letter-spacing:-0.3px;line-height:12px">14</div>
<div class="a" style="left:452px;top:115px;width:1px;height:2px;background:#909090"></div>
<div class="a" style="left:480px;top:104px;width:1px;height:5px;background:#000"></div>
<div class="a" style="left:499px;top:104px;width:1px;height:5px;background:#000"></div>
<div class="t" style="left:479px;top:101px;width:20px;text-align:center;font-family:'Liberation Sans','Noto Sans CJK SC',sans-serif;font-size:10px;letter-spacing:-0.3px;line-height:12px">16</div>
<div class="a" style="left:489px;top:115px;width:1px;height:2px;background:#909090"></div>
<div class="a" style="left:517px;top:104px;width:1px;height:5px;background:#000"></div>
<div class="a" style="left:536px;top:104px;width:1px;height:5px;background:#000"></div>
<div class="t" style="left:517px;top:101px;width:20px;text-align:center;font-family:'Liberation Sans','Noto Sans CJK SC',sans-serif;font-size:10px;letter-spacing:-0.3px;line-height:12px">18</div>
<div class="a" style="left:527px;top:115px;width:1px;height:2px;background:#909090"></div>
<div class="a" style="left:555px;top:104px;width:1px;height:5px;background:#000"></div>
<div class="a" style="left:573px;top:104px;width:1px;height:5px;background:#000"></div>
<div class="t" style="left:554px;top:101px;width:20px;text-align:center;font-family:'Liberation Sans','Noto Sans CJK SC',sans-serif;font-size:10px;letter-spacing:-0.3px;line-height:12px">20</div>
<div class="a" style="left:564px;top:115px;width:1px;height:2px;background:#909090"></div>
<div class="a" style="left:592px;top:104px;width:1px;height:5px;background:#000"></div>
<div class="a" style="left:611px;top:104px;width:1px;height:5px;background:#000"></div>
<div class="t" style="left:591px;top:101px;width:20px;text-align:center;font-family:'Liberation Sans','Noto Sans CJK SC',sans-serif;font-size:10px;letter-spacing:-0.3px;line-height:12px">22</div>
<div class="a" style="left:601px;top:115px;width:1px;height:2px;background:#909090"></div>
<div class="a" style="left:629px;top:104px;width:1px;height:5px;background:#000"></div>
<div class="a" style="left:648px;top:104px;width:1px;height:5px;background:#000"></div>
<div class="t" style="left:629px;top:101px;width:20px;text-align:center;font-family:'Liberation Sans','Noto Sans CJK SC',sans-serif;font-size:10px;letter-spacing:-0.3px;line-height:12px">24</div>
<div class="a" style="left:639px;top:115px;width:1px;height:2px;background:#909090"></div>
<div class="a" style="left:667px;top:104px;width:1px;height:5px;background:#000"></div>
<div class="a" style="left:685px;top:104px;width:1px;height:5px;background:#000"></div>
<div class="t" style="left:666px;top:101px;width:20px;text-align:center;font-family:'Liberation Sans','Noto Sans CJK SC',sans-serif;font-size:10px;letter-spacing:-0.3px;line-height:12px">26</div>
<div class="a" style="left:676px;top:115px;width:1px;height:2px;background:#909090"></div>
<div class="a" style="left:704px;top:104px;width:1px;height:5px;background:#000"></div>
<div class="a" style="left:723px;top:104px;width:1px;height:5px;background:#000"></div>
<div class="t" style="left:703px;top:101px;width:20px;text-align:center;font-family:'Liberation Sans','Noto Sans CJK SC',sans-serif;font-size:10px;letter-spacing:-0.3px;line-height:12px">28</div>
<div class="a" style="left:713px;top:115px;width:1px;height:2px;background:#909090"></div>
<div class="a" style="left:741px;top:104px;width:1px;height:5px;background:#000"></div>
<div class="a" style="left:760px;top:104px;width:1px;height:5px;background:#000"></div>
<div class="t" style="left:741px;top:101px;width:20px;text-align:center;font-family:'Liberation Sans','Noto Sans CJK SC',sans-serif;font-size:10px;letter-spacing:-0.3px;line-height:12px">30</div>
<div class="a" style="left:751px;top:115px;width:1px;height:2px;background:#909090"></div>
<div class="a" style="left:779px;top:104px;width:1px;height:5px;background:#000"></div>
<div class="a" style="left:797px;top:104px;width:1px;height:5px;background:#000"></div>
<div class="t" style="left:778px;top:101px;width:20px;text-align:center;font-family:'Liberation Sans','Noto Sans CJK SC',sans-serif;font-size:10px;letter-spacing:-0.3px;line-height:12px">32</div>
<div class="a" style="left:788px;top:115px;width:1px;height:2px;background:#909090"></div>
<div class="a" style="left:816px;top:104px;width:1px;height:5px;background:#000"></div>
<div class="a" style="left:835px;top:104px;width:1px;height:5px;background:#000"></div>
<div class="t" style="left:815px;top:101px;width:20px;text-align:center;font-family:'Liberation Sans','Noto Sans CJK SC',sans-serif;font-size:10px;letter-spacing:-0.3px;line-height:12px">34</div>
<div class="a" style="left:825px;top:115px;width:1px;height:2px;background:#909090"></div>
<div class="a" style="left:853px;top:104px;width:1px;height:5px;background:#000"></div>
<div class="a" style="left:872px;top:104px;width:1px;height:5px;background:#000"></div>
<div class="t" style="left:853px;top:101px;width:20px;text-align:center;font-family:'Liberation Sans','Noto Sans CJK SC',sans-serif;font-size:10px;letter-spacing:-0.3px;line-height:12px">36</div>
<div class="a" style="left:891px;top:104px;width:1px;height:5px;background:#000"></div>
<div class="a" style="left:909px;top:104px;width:1px;height:5px;background:#000"></div>
<div class="t" style="left:890px;top:101px;width:20px;text-align:center;font-family:'Liberation Sans','Noto Sans CJK SC',sans-serif;font-size:10px;letter-spacing:-0.3px;line-height:12px">38</div>
<div class="a" style="left:928px;top:104px;width:1px;height:5px;background:#000"></div>
<div class="a" style="left:947px;top:104px;width:1px;height:5px;background:#000"></div>
<div class="t" style="left:927px;top:101px;width:20px;text-align:center;font-family:'Liberation Sans','Noto Sans CJK SC',sans-serif;font-size:10px;letter-spacing:-0.3px;line-height:12px">40</div>
<div class="a" style="left:965px;top:104px;width:1px;height:5px;background:#000"></div>
<div class="t" style="left:965px;top:101px;width:20px;text-align:center;font-family:'Liberation Sans','Noto Sans CJK SC',sans-serif;font-size:10px;letter-spacing:-0.3px;line-height:12px">42</div>
<svg style="left:186px;top:98px" width="12" height="22"><path d="M1.5 1.5 H9.5 V3.5 L5.5 7.5 L1.5 3.5 Z" fill="#c4c4c4" stroke="#000"/><path d="M1.5 13.5 L5.5 9.5 L9.5 13.5 V15.5 H1.5 Z" fill="#c4c4c4" stroke="#000"/><rect x="1.5" y="15.5" width="8" height="5" fill="#c4c4c4" stroke="#000"/></svg>
<svg style="left:832px;top:103px" width="12" height="12"><path d="M1.5 9.5 V6.5 L5.5 1.5 L9.5 6.5 V9.5 Z" fill="#c4c4c4" stroke="#000"/></svg>
<div class="a" style="left:7px;top:141px;width:13px;height:110px;background:#808080"></div>
<div class="a" style="left:6px;top:251px;width:14px;height:452px;background:#fff"></div>
<div class="a" style="left:11px;top:153px;width:5px;height:1px;background:#000"></div>
<div class="t" style="left:3px;top:133px;width:20px;height:11px;text-align:center;font-family:'Liberation Sans','Noto Sans CJK SC',sans-serif;font-size:9.500px;letter-spacing:-0.3px;line-height:11px;transform:rotate(-90deg)">4</div>
<div class="a" style="left:11px;top:181px;width:5px;height:1px;background:#000"></div>
<div class="t" style="left:3px;top:161px;width:20px;height:11px;text-align:center;font-family:'Liberation Sans','Noto Sans CJK SC',sans-serif;font-size:9.500px;letter-spacing:-0.3px;line-height:11px;transform:rotate(-90deg)">3</div>
<div class="a" style="left:11px;top:209px;width:5px;height:1px;background:#000"></div>
<div class="t" style="left:3px;top:189px;width:20px;height:11px;text-align:center;font-family:'Liberation Sans','Noto Sans CJK SC',sans-serif;font-size:9.500px;letter-spacing:-0.3px;line-height:11px;transform:rotate(-90deg)">2</div>
<div class="a" style="left:11px;top:237px;width:5px;height:1px;background:#000"></div>
<div class="t" style="left:3px;top:217px;width:20px;height:11px;text-align:center;font-family:'Liberation Sans','Noto Sans CJK SC',sans-serif;font-size:9.500px;letter-spacing:-0.3px;line-height:11px;transform:rotate(-90deg)">1</div>
<div class="a" style="left:11px;top:265px;width:5px;height:1px;background:#000"></div>
<div class="a" style="left:11px;top:293px;width:5px;height:1px;background:#000"></div>
<div class="t" style="left:3px;top:273px;width:20px;height:11px;text-align:center;font-family:'Liberation Sans','Noto Sans CJK SC',sans-serif;font-size:9.500px;letter-spacing:-0.3px;line-height:11px;transform:rotate(-90deg)">1</div>
<div class="a" style="left:11px;top:321px;width:5px;height:1px;background:#000"></div>
<div class="t" style="left:3px;top:301px;width:20px;height:11px;text-align:center;font-family:'Liberation Sans','Noto Sans CJK SC',sans-serif;font-size:9.500px;letter-spacing:-0.3px;line-height:11px;transform:rotate(-90deg)">2</div>
<div class="a" style="left:11px;top:349px;width:5px;height:1px;background:#000"></div>
<div class="t" style="left:3px;top:329px;width:20px;height:11px;text-align:center;font-family:'Liberation Sans','Noto Sans CJK SC',sans-serif;font-size:9.500px;letter-spacing:-0.3px;line-height:11px;transform:rotate(-90deg)">3</div>
<div class="a" style="left:11px;top:377px;width:5px;height:1px;background:#000"></div>
<div class="t" style="left:3px;top:357px;width:20px;height:11px;text-align:center;font-family:'Liberation Sans','Noto Sans CJK SC',sans-serif;font-size:9.500px;letter-spacing:-0.3px;line-height:11px;transform:rotate(-90deg)">4</div>
<div class="a" style="left:11px;top:405px;width:5px;height:1px;background:#000"></div>
<div class="t" style="left:3px;top:385px;width:20px;height:11px;text-align:center;font-family:'Liberation Sans','Noto Sans CJK SC',sans-serif;font-size:9.500px;letter-spacing:-0.3px;line-height:11px;transform:rotate(-90deg)">5</div>
<div class="a" style="left:11px;top:433px;width:5px;height:1px;background:#000"></div>
<div class="t" style="left:3px;top:413px;width:20px;height:11px;text-align:center;font-family:'Liberation Sans','Noto Sans CJK SC',sans-serif;font-size:9.500px;letter-spacing:-0.3px;line-height:11px;transform:rotate(-90deg)">6</div>
<div class="a" style="left:11px;top:461px;width:5px;height:1px;background:#000"></div>
<div class="t" style="left:3px;top:441px;width:20px;height:11px;text-align:center;font-family:'Liberation Sans','Noto Sans CJK SC',sans-serif;font-size:9.500px;letter-spacing:-0.3px;line-height:11px;transform:rotate(-90deg)">7</div>
<div class="a" style="left:11px;top:489px;width:5px;height:1px;background:#000"></div>
<div class="t" style="left:3px;top:469px;width:20px;height:11px;text-align:center;font-family:'Liberation Sans','Noto Sans CJK SC',sans-serif;font-size:9.500px;letter-spacing:-0.3px;line-height:11px;transform:rotate(-90deg)">8</div>
<div class="a" style="left:11px;top:517px;width:5px;height:1px;background:#000"></div>
<div class="t" style="left:3px;top:497px;width:20px;height:11px;text-align:center;font-family:'Liberation Sans','Noto Sans CJK SC',sans-serif;font-size:9.500px;letter-spacing:-0.3px;line-height:11px;transform:rotate(-90deg)">9</div>
<div class="a" style="left:11px;top:545px;width:5px;height:1px;background:#000"></div>
<div class="t" style="left:3px;top:525px;width:20px;height:11px;text-align:center;font-family:'Liberation Sans','Noto Sans CJK SC',sans-serif;font-size:9.500px;letter-spacing:-0.3px;line-height:11px;transform:rotate(-90deg)">10</div>
<div class="a" style="left:11px;top:573px;width:5px;height:1px;background:#000"></div>
<div class="t" style="left:3px;top:553px;width:20px;height:11px;text-align:center;font-family:'Liberation Sans','Noto Sans CJK SC',sans-serif;font-size:9.500px;letter-spacing:-0.3px;line-height:11px;transform:rotate(-90deg)">11</div>
<div class="a" style="left:11px;top:601px;width:5px;height:1px;background:#000"></div>
<div class="t" style="left:3px;top:581px;width:20px;height:11px;text-align:center;font-family:'Liberation Sans','Noto Sans CJK SC',sans-serif;font-size:9.500px;letter-spacing:-0.3px;line-height:11px;transform:rotate(-90deg)">12</div>
<div class="a" style="left:11px;top:629px;width:5px;height:1px;background:#000"></div>
<div class="t" style="left:3px;top:609px;width:20px;height:11px;text-align:center;font-family:'Liberation Sans','Noto Sans CJK SC',sans-serif;font-size:9.500px;letter-spacing:-0.3px;line-height:11px;transform:rotate(-90deg)">13</div>
<div class="a" style="left:11px;top:657px;width:5px;height:1px;background:#000"></div>
<div class="t" style="left:3px;top:637px;width:20px;height:11px;text-align:center;font-family:'Liberation Sans','Noto Sans CJK SC',sans-serif;font-size:9.500px;letter-spacing:-0.3px;line-height:11px;transform:rotate(-90deg)">14</div>
<div class="a" style="left:11px;top:685px;width:5px;height:1px;background:#000"></div>
<div class="t" style="left:3px;top:665px;width:20px;height:11px;text-align:center;font-family:'Liberation Sans','Noto Sans CJK SC',sans-serif;font-size:9.500px;letter-spacing:-0.3px;line-height:11px;transform:rotate(-90deg)">15</div>
<div class="t" style="left:3px;top:693px;width:20px;height:11px;text-align:center;font-family:'Liberation Sans','Noto Sans CJK SC',sans-serif;font-size:9.500px;letter-spacing:-0.3px;line-height:11px;transform:rotate(-90deg)">16</div>
<div class="a" style="left:164px;top:223px;width:28px;height:28px;border-right:1px solid #a0a0a0;border-bottom:1px solid #a0a0a0"></div>
<div class="a" style="left:838px;top:223px;width:28px;height:28px;border-left:1px solid #a0a0a0;border-bottom:1px solid #a0a0a0"></div>
<div class="t" style="left:192px;top:257px;font-size:18px;color:#303030;font-family:'Liberation Serif','Noto Serif CJK SC',serif">大</div>
<svg style="left:211px;top:262px" width="9" height="9"><path d="M7.5 0.5 V5.5 H1.5 M4 3 L1.5 5.5 L4 8" fill="none" stroke="#707070" stroke-width="1"/></svg>
<div class="a" style="left:1006px;top:97px;width:16px;height:606px;background-image:conic-gradient(#fff 25%,#c0c0c0 0 50%,#fff 0 75%,#c0c0c0 0);background-size:2px 2px"></div>
<div class="a" style="left:1006px;top:97px;width:16px;height:5px;background:#c0c0c0;border:1px solid;border-color:#fff #000 #000 #fff"></div>
<div class="raised" style="left:1006px;top:102px;width:16px;height:16px"></div>
<div class="arr" style="left:1010px;top:108px;border-top:0;border-bottom:4px solid #000;border-left-width:4px;border-right-width:4px"></div>
<div class="raised" style="left:1006px;top:118px;width:16px;height:226px"></div>
<div class="raised" style="left:1006px;top:639px;width:16px;height:16px"></div>
<div class="arr" style="left:1010px;top:645px;border-top:4px solid #000;border-left-width:4px;border-right-width:4px"></div>
<div class="a" style="left:1006px;top:655px;width:16px;height:48px;background:#c0c0c0"></div>
<svg style="left:1006px;top:655px" width="16" height="48"><path d="M8 5 L11 8 H5 Z M8 9 L11 12 H5 Z" fill="#000"/><circle cx="8" cy="23.5" r="3" fill="#c8c8c8" stroke="#404040"/><path d="M8 43 L11 40 H5 Z M8 39 L11 36 H5 Z" fill="#000"/></svg>
<div class="a" style="left:4px;top:703px;width:1002px;height:17px;background:#c0c0c0"></div>
<div class="a" style="left:4px;top:704px;width:1002px;height:1px;background:#fff"></div>
<div class="a" style="left:98px;top:704px;width:908px;height:15px;background:#c0c0c0;border-bottom:1px solid #000;border-top:1px solid #fff;border-left:1px solid #fff"></div>
<div class="a" style="left:99px;top:717px;width:907px;height:1px;background:#808080"></div>
<div class="raised" style="left:83px;top:704px;width:15px;height:15px"></div>
<svg style="left:87px;top:707px" width="4" height="7"><path d="M4 0 L0 3.500 L4 7 Z" fill="#000"/></svg>
<svg style="left:4px;top:705px" width="80" height="14"><path d="M2 3.5 H11 M2 5.5 H11 M2 7.5 H11 M2 9.5 H11" stroke="#000"/><rect x="19.500" y="3.500" width="7" height="6" fill="#fff" stroke="#000"/><circle cx="25" cy="8.500" r="2.500" fill="#204080"/><rect x="30.500" y="-0.500" width="15" height="14" fill="#d4d4e4" stroke="#000080"/><rect x="34.500" y="3.500" width="8" height="8" fill="#fff" stroke="#000"/><path d="M36 6.500 H41 M36 8.500 H41" stroke="#000"/><path d="M51 3.500 H59 M53 5.500 H59 M55 7.500 H59 M53 9.500 H59" stroke="#000"/><rect x="51" y="5" width="1" height="1"/><rect x="53" y="7" width="1" height="1"/><path d="M66.500 3.500 H70 L71 4.500 L72 3.500 H75.500 V10.500 H72 L71 11.500 L70 10.500 H66.500 Z" fill="#fff" stroke="#000"/><path d="M71 4 V11" stroke="#000"/></svg>
<div class="a" style="left:0;top:720px;width:1024px;height:22px;background:#c0c0c0;border-top:1px solid #fff"></div>
<div class="a" style="left:4px;top:722px;width:178px;height:18px;border:1px solid;border-color:#b0b0b0 #d4d4d4 #d4d4d4 #b0b0b0"></div>
<div class="a" style="left:184px;top:722px;width:172px;height:18px;border:1px solid;border-color:#b0b0b0 #d4d4d4 #d4d4d4 #b0b0b0"></div>
<div class="a" style="left:358px;top:722px;width:32px;height:18px;border:1px solid;border-color:#b0b0b0 #d4d4d4 #d4d4d4 #b0b0b0"></div>
<div class="a" style="left:392px;top:722px;width:30px;height:18px;border:1px solid;border-color:#b0b0b0 #d4d4d4 #d4d4d4 #b0b0b0"></div>
<div class="a" style="left:424px;top:722px;width:32px;height:18px;border:1px solid;border-color:#b0b0b0 #d4d4d4 #d4d4d4 #b0b0b0"></div>
<div class="a" style="left:458px;top:722px;width:32px;height:18px;border:1px solid;border-color:#b0b0b0 #d4d4d4 #d4d4d4 #b0b0b0"></div>
<div class="a" style="left:492px;top:722px;width:68px;height:18px;border:1px solid;border-color:#b0b0b0 #d4d4d4 #d4d4d4 #b0b0b0"></div>
<div class="a" style="left:562px;top:722px;width:40px;height:18px;border:1px solid;border-color:#b0b0b0 #d4d4d4 #d4d4d4 #b0b0b0"></div>
<div class="a" style="left:604px;top:722px;width:40px;height:18px;border:1px solid;border-color:#b0b0b0 #d4d4d4 #d4d4d4 #b0b0b0"></div>
<div class="a" style="left:646px;top:722px;width:40px;height:18px;border:1px solid;border-color:#b0b0b0 #d4d4d4 #d4d4d4 #b0b0b0"></div>
<div class="a" style="left:688px;top:722px;width:40px;height:18px;border:1px solid;border-color:#b0b0b0 #d4d4d4 #d4d4d4 #b0b0b0"></div>
<div class="a" style="left:730px;top:722px;width:50px;height:18px;border:1px solid;border-color:#b0b0b0 #d4d4d4 #d4d4d4 #b0b0b0"></div>
<div class="t" style="left:11px;top:725px;font-size:12px;word-spacing:2px">頁 1</div>
<div class="t" style="left:55px;top:725px;font-size:12px;word-spacing:2px">節 1</div>
<div class="t" style="left:143px;top:725px;font-size:12px;word-spacing:2px">1/1</div>
<div class="t" style="left:190px;top:725px;font-size:12px;word-spacing:2px">於 2.5cm</div>
<div class="t" style="left:262px;top:725px;font-size:12px;word-spacing:2px">行 1</div>
<div class="t" style="left:305px;top:725px;font-size:12px;word-spacing:2px">欄 2</div>
<div class="t" style="left:362px;top:724px;font-size:12px;color:#808080;text-shadow:1px 1px 0 #fff;letter-spacing:0.5px">REC</div>
<div class="t" style="left:396px;top:724px;font-size:12px;color:#808080;text-shadow:1px 1px 0 #fff;letter-spacing:0.5px">TRK</div>
<div class="t" style="left:428px;top:724px;font-size:12px;color:#808080;text-shadow:1px 1px 0 #fff;letter-spacing:0.5px">EXT</div>
<div class="t" style="left:460px;top:724px;font-size:12px;color:#808080;text-shadow:1px 1px 0 #fff;letter-spacing:0.5px">OVR</div>
<div class="t" style="left:495px;top:724px;font-size:12px">中文 (台灣)</div>
<svg style="left:574px;top:722px" width="20" height="16"><path d="M1.500 4.500 H6 L8 6 L10 4.500 H14.500 V13.500 H10 L8 14.500 L6 13.500 H1.500 Z" fill="#fff" stroke="#000"/><path d="M8 6 V14" stroke="#000"/><path d="M9 11 L11 13 L17 3" fill="none" stroke="#c00000" stroke-width="1.500"/></svg>
<div class="a" style="left:783px;top:704px;width:241px;height:37px;background:#c0c0c0;border-top:1px solid #fff"></div>
<div class="a" style="left:783px;top:715px;width:3px;height:22px;border-left:2px solid #fff;border-right:1px solid #808080"></div>
<div class="raised" style="left:990px;top:704px;width:15px;height:12px"></div>
<svg style="left:996px;top:707px" width="4" height="7"><path d="M0 0 L4 3.500 L0 7 Z" fill="#000"/></svg>
<div class="a" style="left:988px;top:704px;width:2px;height:12px;background:#000"></div>
<div class="a" style="left:1006px;top:703px;width:18px;height:38px;background:#c0c0c0"></div>
<!--LB-->
<div class="a" style="left:877px;top:714px;width:2px;height:23px;border-left:1px solid #808080;border-right:1px solid #fff"></div>
<div class="a" style="left:928px;top:714px;width:2px;height:23px;border-left:1px solid #808080;border-right:1px solid #fff"></div>
<div class="a" style="left:978px;top:714px;width:2px;height:23px;border-left:1px solid #808080;border-right:1px solid #fff"></div>
<div class="a" style="left:1005px;top:714px;width:2px;height:23px;border-left:1px solid #808080;border-right:1px solid #fff"></div>
<div class="a" style="left:1012px;top:721px;width:6px;height:2px;background:#000"></div>
<div class="dd" style="left:1012px;top:729px"></div>
<div class="a" style="left:0;top:741px;width:1024px;height:27px;background:#c0c0c0;border-top:1px solid #fff"></div>
<div class="raised" style="left:2px;top:744px;width:47px;height:22px"></div>
<div class="t" style="left:22px;top:749px;font-size:12px;font-weight:500">開始</div>
<div class="t" style="left:131px;top:746px;font-size:12px;font-weight:bold;font-family:'Liberation Sans','Noto Sans CJK SC',sans-serif">»</div>
<div class="raised" style="left:143px;top:744px;width:160px;height:22px"></div>
<div class="t" style="left:167px;top:749px;font-size:12px">我的這一班 - Mozilla Fir...</div>
<div class="raised" style="left:306px;top:744px;width:160px;height:22px"></div>
<div class="t" style="left:330px;top:749px;font-size:12px">13%／1 個檔案 - 下載</div>
<div class="a" style="left:469px;top:744px;width:160px;height:22px;border:1px solid;border-color:#000 #fff #fff #000;box-shadow:inset 1px 1px 0 #808080;background-image:conic-gradient(#fff 25%,#c0c0c0 0 50%,#fff 0 75%,#c0c0c0 0);background-size:2px 2px"></div>
<div class="t" style="left:494px;top:750px;font-size:12px">文件1 - Microsoft Word</div>
<div class="sunk" style="left:848px;top:744px;width:174px;height:22px"></div>
<div class="t" style="left:852px;top:748px;font-size:13px;font-weight:bold;font-family:'Liberation Sans','Noto Sans CJK SC',sans-serif">«</div>
<div class="t" style="left:960px;top:749px;font-size:12px;letter-spacing:-0.4px;font-family:'Liberation Sans','Noto Sans CJK SC',sans-serif">上午 09:42</div>
<div class="t" style="left:940px;top:747px;font-size:15px;font-weight:bold;color:#e02020;font-family:'Liberation Sans','Noto Sans CJK SC',sans-serif">P</div>
<!--TRAY-->
<div class="a" style="left:213px;top:317px;width:520px;height:209px;background:#c0c0c0;border:1px solid;border-color:#c0c0c0 #000 #000 #c0c0c0;box-shadow:inset 1px 1px 0 #fff,inset -1px -1px 0 #b0b0b0"></div>
<div class="a" style="left:217px;top:321px;width:512px;height:19px;background:linear-gradient(90deg,#000080,#1084d0)"></div>
<div class="t" style="left:241px;top:324px;font-size:12px;color:#fff;font-weight:500">輸入法整合器 - 手寫識別 <b>(CH)</b></div>
<div class="raised" style="left:711px;top:323px;width:16px;height:14px"></div>
<svg style="left:711px;top:323px" width="16" height="14"><path d="M4 3 L11 10 M11 3 L4 10" stroke="#000" stroke-width="1.700"/></svg>
<div class="a" style="left:215px;top:341px;width:516px;height:1px;background:#fff"></div>
<div class="a" style="left:219px;top:345px;width:22px;height:22px;border:1px solid;border-color:#808080 #fff #fff #808080;background:#dcdcdc"></div>
<div class="t" style="left:221px;top:369px;font-size:16px;font-weight:500;color:#2020d8;font-family:'Liberation Sans','Noto Sans CJK SC',sans-serif">劃</div>
<div class="t" style="left:221px;top:391px;font-size:16px;font-weight:500;color:#2020d8;font-family:'Liberation Sans','Noto Sans CJK SC',sans-serif">部</div>
<div class="t" style="left:221px;top:413px;font-size:16px;font-weight:500;color:#2020d8;font-family:'Liberation Sans','Noto Sans CJK SC',sans-serif">符</div>
<div class="a" style="left:242px;top:342px;width:2px;height:181px;border-left:1px solid #808080;border-right:1px solid #fff"></div>
<div class="a" style="left:248px;top:346px;width:172px;height:173px;background:#fff;border:1px solid;border-color:#808080 #fff #fff #808080;box-shadow:inset 1px 1px 0 #000,inset -1px -1px 0 #c0c0c0"></div>
<div class="a" style="left:258px;top:356px;width:10px;height:10px;border-left:1px solid #808080;border-top:1px solid #808080"></div>
<div class="a" style="left:401px;top:356px;width:10px;height:10px;border-right:1px solid #808080;border-top:1px solid #808080"></div>
<div class="a" style="left:258px;top:499px;width:10px;height:10px;border-left:1px solid #808080;border-bottom:1px solid #808080"></div>
<div class="a" style="left:401px;top:499px;width:10px;height:10px;border-right:1px solid #808080;border-bottom:1px solid #808080"></div>
<svg style="left:250px;top:348px" width="168" height="169" viewBox="250 348 168 169"><path d="M324 430.500 H344 M334.500 421 V440" stroke="#909090" stroke-width="1" fill="none"/><path d="M290 381 Q300 378 312 377.500 L338 376.500 L378 376.500 Q386 377 386 381 L385 402 L378 420" fill="none" stroke="#000" stroke-width="2.200" stroke-linejoin="round" stroke-linecap="round"/><path d="M292 384 L291.500 431" fill="none" stroke="#000" stroke-width="2.200" stroke-linecap="round"/><path d="M293 420 L340 419.500 L386 420.500" fill="none" stroke="#000" stroke-width="2.200" stroke-linecap="round"/><path d="M339 359 V463" fill="none" stroke="#000" stroke-width="2.200" stroke-linecap="round"/></svg>
<div class="a" style="left:429px;top:346px;width:145px;height:172px;background:#fff;border:1px solid;border-color:#808080 #fff #fff #808080;box-shadow:inset 1px 1px 0 #000,inset -1px -1px 0 #c0c0c0"></div>
<div class="a" style="left:431px;top:348px;width:126px;height:168px;overflow:hidden">
<div class="t" style="left:3px;top:6px;width:20px;text-align:center;font-size:20px;font-weight:350;font-family:'Liberation Serif','Noto Sans CJK SC',sans-serif">中</div>
<div class="t" style="left:32px;top:6px;width:20px;text-align:center;font-size:20px;font-weight:350;font-family:'Liberation Serif','Noto Sans CJK SC',sans-serif">牛</div>
<div class="t" style="left:61px;top:6px;width:20px;text-align:center;font-size:20px;font-weight:350;font-family:'Liberation Serif','Noto Sans CJK SC',sans-serif">午</div>
<div class="t" style="left:90px;top:6px;width:20px;text-align:center;font-size:20px;font-weight:350;font-family:'Liberation Serif','Noto Sans CJK SC',sans-serif">由</div>
<div class="t" style="left:3px;top:35px;width:20px;text-align:center;font-size:20px;font-weight:350;font-family:'Liberation Serif','Noto Sans CJK SC',sans-serif">平</div>
<div class="t" style="left:32px;top:35px;width:20px;text-align:center;font-size:20px;font-weight:350;font-family:'Liberation Serif','Noto Sans CJK SC',sans-serif">*</div>
<div class="t" style="left:61px;top:35px;width:20px;text-align:center;font-size:20px;font-weight:350;font-family:'Liberation Serif','Noto Sans CJK SC',sans-serif">肀</div>
<div class="t" style="left:90px;top:35px;width:20px;text-align:center;font-size:20px;font-weight:350;font-family:'Liberation Serif','Noto Sans CJK SC',sans-serif">丰</div>
<div class="t" style="left:3px;top:64px;width:20px;text-align:center;font-size:20px;font-weight:350;font-family:'Liberation Serif','Noto Sans CJK SC',sans-serif">忠</div>
<div class="t" style="left:32px;top:64px;width:20px;text-align:center;font-size:20px;font-weight:350;font-family:'Liberation Serif','Noto Sans CJK SC',sans-serif">迪</div>
<div class="t" style="left:61px;top:64px;width:20px;text-align:center;font-size:20px;font-weight:350;font-family:'Liberation Serif','Noto Sans CJK SC',sans-serif">黑</div>
<div class="t" style="left:90px;top:64px;width:20px;text-align:center;font-size:20px;font-weight:350;font-family:'Liberation Serif','Noto Sans CJK SC',sans-serif">典</div>
<div class="t" style="left:3px;top:93px;width:20px;text-align:center;font-size:20px;font-weight:350;font-family:'Liberation Serif','Noto Sans CJK SC',sans-serif">黒</div>
<div class="t" style="left:32px;top:93px;width:20px;text-align:center;font-size:20px;font-weight:350;font-family:'Liberation Serif','Noto Sans CJK SC',sans-serif">盅</div>
<div class="t" style="left:61px;top:93px;width:20px;text-align:center;font-size:20px;font-weight:350;font-family:'Liberation Serif','Noto Sans CJK SC',sans-serif">甹</div>
<div class="t" style="left:90px;top:93px;width:20px;text-align:center;font-size:20px;font-weight:350;font-family:'Liberation Serif','Noto Sans CJK SC',sans-serif">胄</div>
<div class="t" style="left:3px;top:122px;width:20px;text-align:center;font-size:20px;font-weight:350;font-family:'Liberation Serif','Noto Sans CJK SC',sans-serif">串</div>
<div class="t" style="left:32px;top:122px;width:20px;text-align:center;font-size:20px;font-weight:350;font-family:'Liberation Serif','Noto Sans CJK SC',sans-serif">冑</div>
<div class="t" style="left:61px;top:122px;width:20px;text-align:center;font-size:20px;font-weight:350;font-family:'Liberation Serif','Noto Sans CJK SC',sans-serif">墨</div>
<div class="t" style="left:90px;top:122px;width:20px;text-align:center;font-size:20px;font-weight:350;font-family:'Liberation Serif','Noto Sans CJK SC',sans-serif">思</div>
<div class="t" style="left:3px;top:151px;width:20px;text-align:center;font-size:20px;font-weight:350;font-family:'Liberation Serif','Noto Sans CJK SC',sans-serif">史</div>
<div class="t" style="left:32px;top:151px;width:20px;text-align:center;font-size:20px;font-weight:350;font-family:'Liberation Serif','Noto Sans CJK SC',sans-serif">足</div>
<div class="t" style="left:61px;top:151px;width:20px;text-align:center;font-size:20px;font-weight:350;font-family:'Liberation Serif','Noto Sans CJK SC',sans-serif">贵</div>
<div class="t" style="left:90px;top:151px;width:20px;text-align:center;font-size:20px;font-weight:350;font-family:'Liberation Serif','Noto Sans CJK SC',sans-serif">貴</div>
</div>
<div class="a" style="left:557px;top:348px;width:16px;height:168px;background-image:conic-gradient(#fff 25%,#c0c0c0 0 50%,#fff 0 75%,#c0c0c0 0);background-size:2px 2px"></div>
<div class="raised" style="left:557px;top:348px;width:16px;height:16px"></div>
<div class="arr" style="left:561px;top:354px;border-top:0;border-bottom:4px solid #000;border-left-width:4px;border-right-width:4px"></div>
<div class="raised" style="left:557px;top:364px;width:16px;height:76px"></div>
<div class="raised" style="left:557px;top:500px;width:16px;height:16px"></div>
<div class="arr" style="left:561px;top:506px;border-top-width:4px;border-left-width:4px;border-right-width:4px"></div>
<div class="a" style="left:582px;top:346px;width:42px;height:18px;border:1px solid;border-color:#fff #808080 #808080 #fff"></div>
<div class="dd" style="left:614px;top:353px"></div>
<div class="a" style="left:582px;top:372px;width:42px;height:18px;border:1px solid;border-color:#808080 #fff #fff #808080;background-image:conic-gradient(#fff 25%,#c0c0c0 0 50%,#fff 0 75%,#c0c0c0 0);background-size:2px 2px"></div>
<div class="a" style="left:582px;top:392px;width:42px;height:18px;border:1px solid;border-color:#fff #808080 #808080 #fff"></div>
<div class="a" style="left:582px;top:412px;width:42px;height:18px;border:1px solid;border-color:#fff #808080 #808080 #fff"></div>
<div class="t" style="left:591px;top:376px;font-size:12px">識別</div>
<div class="t" style="left:591px;top:396px;font-size:12px">復原</div>
<div class="t" style="left:591px;top:416px;font-size:12px">清除</div>
<div class="a" style="left:632px;top:342px;width:2px;height:181px;border-left:1px solid #808080;border-right:1px solid #fff"></div>
<div class="raised" style="left:636px;top:344px;width:44px;height:21px"></div>
<div class="t" style="left:636px;top:348px;width:44px;text-align:center;font-size:12px">BS</div>
<div class="raised" style="left:682px;top:344px;width:44px;height:21px"></div>
<div class="t" style="left:682px;top:348px;width:44px;text-align:center;font-size:12px">Del</div>
<div class="raised" style="left:636px;top:366px;width:44px;height:21px"></div>
<div class="t" style="left:636px;top:370px;width:44px;text-align:center;font-size:12px">Enter</div>
<div class="raised" style="left:682px;top:366px;width:44px;height:21px"></div>
<div class="t" style="left:682px;top:370px;width:44px;text-align:center;font-size:12px">Esc</div>
<div class="raised" style="left:636px;top:388px;width:44px;height:21px"></div>
<div class="t" style="left:636px;top:392px;width:44px;text-align:center;font-size:12px">Space</div>
<div class="raised" style="left:682px;top:388px;width:44px;height:43px"></div>
<svg style="left:682px;top:388px" width="44" height="43"><path d="M2 2 L42 41 M42 2 L2 41" stroke="#808080" stroke-width="1"/><path d="M3 2 L43 41 M43 2 L3 41" stroke="#fff" stroke-width="1"/><path d="M22 5 V16 M22 27 V38 M5 21.500 H16 M28 21.500 H39" stroke="#000" stroke-width="1"/><path d="M22 3 L24.500 7 H19.500 Z M22 40 L24.500 36 H19.500 Z M3 21.500 L7 19 V24 Z M41 21.500 L37 19 V24 Z" fill="#000"/></svg>
<!--END-->
<div class="a" style="left:791px;top:718px;width:16px;height:16px;border-radius:3px;background:#108478"></div>
<div class="t" style="left:791px;top:719px;width:16px;text-align:center;font-size:14px;font-weight:bold;color:#fff;font-family:'Liberation Sans','Noto Sans CJK SC',sans-serif">善</div>
<div class="t" style="left:813px;top:719px;width:16px;text-align:center;font-size:14px;font-weight:bold;color:#c02020;font-family:'Liberation Sans','Noto Sans CJK SC',sans-serif">善</div>
<svg style="left:837px;top:720px" width="13" height="13"><rect x="0" y="0" width="12" height="12" fill="#fff"/><rect x="1" y="1" width="5" height="10" fill="#808080"/><path d="M0.500 12.500 H12.500 V0.500" fill="none" stroke="#000"/></svg>
<svg style="left:857px;top:719px" width="17" height="16"><rect x="0.500" y="1.500" width="11" height="12" fill="#fff" stroke="#000"/><rect x="1" y="2" width="10" height="3" fill="#1828a0"/><path d="M2 7.500 H10 M2 9.500 H10 M2 11.500 H10" stroke="#000"/><path d="M10.500 4.500 V14 L12.500 12 L14 15.500 L15.500 14.800 L14 11.500 H16.500 Z" fill="#fff" stroke="#000" stroke-width="0.900"/></svg>
<svg style="left:886px;top:718px" width="16" height="17"><path d="M4 10 L9.500 4.500 L11.500 6.500 L6 12 Z" fill="#d8d8d8" stroke="#202020"/><circle cx="11.500" cy="4.500" r="3" fill="#b0b0b0" stroke="#202020"/><path d="M9.500 3 L13 6 M10.500 2 L14 5" stroke="#606060" stroke-width="0.700"/><path d="M4.500 11.500 Q1 14 3.500 15.500 Q6 16.500 7.500 14" fill="none" stroke="#202020" stroke-width="1.200"/></svg>
<svg style="left:907px;top:718px" width="17" height="17"><rect x="1.500" y="0.500" width="14" height="11" fill="#fff" stroke="#000"/><rect x="1" y="0" width="15" height="3" fill="#1828a0"/><path d="M3 5.500 H8 M3 7.500 H7 M3 9.500 H6" stroke="#000"/><path d="M6.500 11.500 L11 7 L12.500 8.500 L8 13 Z" fill="#d8d8d8" stroke="#202020" stroke-width="0.900"/><circle cx="12.500" cy="6.500" r="2.200" fill="#c0c0c0" stroke="#202020" stroke-width="0.900"/><path d="M7 12.500 Q4.500 14.500 6.500 15.800 Q8.500 16.500 9.500 14.500" fill="none" stroke="#202020" stroke-width="1.100"/></svg>
<svg style="left:936px;top:719px" width="17" height="15"><path d="M3.500 10.500 L11.500 1.500 L13 2.800 L5.500 11.500 Z" fill="#e8e060" stroke="#000" stroke-width="0.900"/><path d="M1 11.500 L4 10 M1 12.500 H6" stroke="#000"/><path d="M3 12.500 Q7 9 10 10.500 L13 10 V13.500 H4 Z" fill="#fff" stroke="#404040" stroke-width="0.800"/><rect x="11" y="9.500" width="5" height="4.500" fill="#1838c8"/><rect x="12.500" y="11" width="2" height="1.500" fill="#fff"/></svg>
<svg style="left:957px;top:720px" width="17" height="13"><rect x="0.500" y="0.500" width="15" height="11" fill="#fff" stroke="#606060"/><rect x="1" y="1" width="14" height="3" fill="#909090"/><path d="M11 1.500 L13.500 3.500 M13.500 1.500 L11 3.500" stroke="#e0e0e0" stroke-width="0.700"/><rect x="3.500" y="6.500" width="3" height="3" fill="#fff" stroke="#000" stroke-width="1.300"/><rect x="8.500" y="6.500" width="3" height="3" fill="#fff" stroke="#000" stroke-width="1.300"/></svg>
<svg style="left:986px;top:718px" width="14" height="17"><path d="M0.500 1.500 H12.500 V12.500 H10.500 L9.500 15.500 L7 12.500 H0.500 Z" fill="#ffffc8" stroke="#000" stroke-width="1.200"/><text x="6.500" y="11" font-size="11" font-weight="bold" text-anchor="middle" font-family="Liberation Sans,sans-serif" fill="#1828a0">?</text></svg>
<svg style="left:865px;top:747px" width="16" height="16"><rect x="1" y="0.500" width="6" height="6.500" rx="1.500" fill="none" stroke="#e85020" stroke-width="1.800"/><rect x="9.500" y="2.500" width="5" height="4.500" rx="1.200" fill="none" stroke="#3878d8" stroke-width="1.700"/><rect x="1.500" y="9.500" width="5.500" height="5.500" rx="1.200" fill="#f8e070" stroke="#e8b820" stroke-width="1.700"/><rect x="9.500" y="9.500" width="5" height="4.500" rx="1.200" fill="none" stroke="#58a838" stroke-width="1.700"/></svg>
<svg style="left:882px;top:747px" width="17" height="17"><defs><radialGradient id="gb" cx="0.4" cy="0.3" r="0.8"><stop offset="0" stop-color="#90e070"/><stop offset="0.5" stop-color="#38b028"/><stop offset="1" stop-color="#187010"/></radialGradient></defs><circle cx="8.500" cy="8.500" r="7.800" fill="url(#gb)" stroke="#1c7010" stroke-width="0.600"/><path d="M4.500 12.500 Q9.500 10.500 13 4.500 Q13.500 13 4.500 12.500 Z" fill="#c8f8b0" opacity="0.85"/></svg>
<svg style="left:901px;top:747px" width="15" height="16"><rect x="6" y="0.500" width="8" height="7" rx="1" fill="#90c8f8" stroke="#5890d0"/><rect x="1" y="5" width="8" height="7" rx="1" fill="#78b8f0" stroke="#4880c8"/><rect x="2.500" y="12.500" width="5" height="2" fill="#d0d8e8"/><rect x="8" y="8.500" width="5" height="2" fill="#d0d8e8"/><path d="M8 11 L11 13" stroke="#8898b8"/></svg>
<svg style="left:919px;top:747px" width="15" height="16"><circle cx="6.500" cy="7" r="6" fill="#808080" stroke="#505050"/><circle cx="6.500" cy="7" r="3.500" fill="#b8b8b8" stroke="#606060"/><circle cx="6.500" cy="7" r="1.500" fill="#505050"/><path d="M11 12 Q13 13 13.500 15" fill="none" stroke="#a0b0d0" stroke-width="1"/></svg>
<svg style="left:4px;top:747px" width="15" height="14"><path d="M1.500 2.500 Q4 0.500 7 2.500 L6 7 Q3.500 5 0.500 7 Z" fill="#e85820"/><path d="M8 2.800 Q10.500 4.500 14 2.500 L13 7 Q10 9 7 7.200 Z" fill="#58b030"/><path d="M0.300 8 Q3 6 5.800 8 L4.800 12.500 Q2.500 10.500 -0.500 12.500 Z" fill="#3878e0"/><path d="M6.800 8.200 Q9.500 10 12.800 8 L11.800 12.500 Q9 14.500 5.800 12.700 Z" fill="#f0c020"/></svg>
<svg style="left:57px;top:747px" width="16" height="16"><path d="M2 3 Q2 1.500 3.500 1.500 H12 Q14 1.500 13.500 3.500 L12 13 Q11.800 14.500 10 14.500 H2.500 Q1 14.500 1.200 13 Z" fill="#3888e0" stroke="#1858b0"/><path d="M4 4 H11.500 L10.500 12 H3 Z" fill="#e8f4ff"/><path d="M9.500 5.500 Q6 5 5.500 8 Q5.500 10.500 8.500 10.500 M5.500 8 H9" fill="none" stroke="#2868c8" stroke-width="1.300"/><circle cx="13.500" cy="6" r="1" fill="#e06020"/></svg>
<svg style="left:80px;top:747px" width="16" height="16"><path d="M1.500 13 V3.500 Q1.500 2.500 2.500 2.500 H6 L7.500 4.500 H13 Q14 4.500 14 5.500 V7" fill="#f8dc78" stroke="#c09020"/><path d="M2 13.500 L3.500 6.500 H15 L13 13.500 Z" fill="#f0c848" stroke="#b08018"/><rect x="5" y="5" width="6" height="5" fill="#d0e8f8" stroke="#88a8c8" stroke-width="0.600"/></svg>
<svg style="left:103px;top:747px" width="16" height="16"><g transform="scale(1.000)"><circle cx="8" cy="8" r="7.300" fill="#e8741c"/><circle cx="8.800" cy="6.800" r="4.600" fill="#3468c0"/><path d="M8 3 Q11 2.500 12.500 5 Q10 4.500 9 6 Q11 7 10 9 Q8 10.500 5.500 9 Q4 7.500 4.500 5 Q3 7 3.500 9.500 Q5 13 9 12.500 Q13 12 13.500 8 Q15 11 12.500 13.500 Q9 16 5 14 Q1 11.500 1.500 7 Q2 3.500 5 2 Q4.500 3.500 5.500 4 Q6.500 3 8 3 Z" fill="#f09020"/><path d="M2 5 Q1 9 3 12 Q5.500 15 9.500 14.800 Q4.500 14 3.500 10 Q3 7 4.500 5 Z" fill="#d84c10"/><circle cx="10.500" cy="4.500" r="1.200" fill="#88b8f0"/></g></svg>
<svg style="left:147px;top:747px" width="16" height="16"><g transform="scale(1.000)"><circle cx="8" cy="8" r="7.300" fill="#e8741c"/><circle cx="8.800" cy="6.800" r="4.600" fill="#3468c0"/><path d="M8 3 Q11 2.500 12.500 5 Q10 4.500 9 6 Q11 7 10 9 Q8 10.500 5.500 9 Q4 7.500 4.500 5 Q3 7 3.500 9.500 Q5 13 9 12.500 Q13 12 13.500 8 Q15 11 12.500 13.500 Q9 16 5 14 Q1 11.500 1.500 7 Q2 3.500 5 2 Q4.500 3.500 5.500 4 Q6.500 3 8 3 Z" fill="#f09020"/><path d="M2 5 Q1 9 3 12 Q5.500 15 9.500 14.800 Q4.500 14 3.500 10 Q3 7 4.500 5 Z" fill="#d84c10"/><circle cx="10.500" cy="4.500" r="1.200" fill="#88b8f0"/></g></svg>
<svg style="left:310px;top:747px" width="16" height="16"><g transform="scale(1.000)"><circle cx="8" cy="8" r="7.300" fill="#e8741c"/><circle cx="8.800" cy="6.800" r="4.600" fill="#3468c0"/><path d="M8 3 Q11 2.500 12.500 5 Q10 4.500 9 6 Q11 7 10 9 Q8 10.500 5.500 9 Q4 7.500 4.500 5 Q3 7 3.500 9.500 Q5 13 9 12.500 Q13 12 13.500 8 Q15 11 12.500 13.500 Q9 16 5 14 Q1 11.500 1.500 7 Q2 3.500 5 2 Q4.500 3.500 5.500 4 Q6.500 3 8 3 Z" fill="#f09020"/><path d="M2 5 Q1 9 3 12 Q5.500 15 9.500 14.800 Q4.500 14 3.500 10 Q3 7 4.500 5 Z" fill="#d84c10"/><circle cx="10.500" cy="4.500" r="1.200" fill="#88b8f0"/></g></svg>
<svg style="left:474px;top:748px" width="16" height="16"><rect x="4.500" y="0.500" width="10" height="14" fill="#f4f8ff" stroke="#7890c8"/><path d="M7 4.500 H13 M7 7.500 H13 M7 10.500 H13" stroke="#b0c0e0"/><rect x="0.500" y="2.500" width="9" height="9" fill="#2c50b8" stroke="#a8b8e8"/><text x="5" y="10.500" font-size="9" font-weight="bold" fill="#fff" text-anchor="middle" font-family="Liberation Sans,sans-serif">W</text></svg>
<svg style="left:218px;top:322px" width="16" height="16"><path d="M2 7.500 L7 9.500 L13 6.500 L13.500 12 L7.500 15 L1.500 12.500 Z" fill="#f0d840" stroke="#403000" stroke-width="0.900"/><path d="M2 7.500 L8 5 L13 6.500 L7 9.500 Z" fill="#fff" stroke="#403000" stroke-width="0.800"/><path d="M3 2 L5.500 7 L7 6.300 Z" fill="#e02020"/><path d="M3 1 L4.500 2.500" stroke="#f0c020" stroke-width="1.500"/><circle cx="11.500" cy="3" r="2.300" fill="#d8e8f8" stroke="#5070a0"/><path d="M10 4.500 L7.500 7.500" stroke="#404040" stroke-width="1.200"/></svg>
<svg style="left:222px;top:348px" width="16" height="16"><circle cx="4.500" cy="4" r="2.800" fill="#a8e8f0" stroke="#4090a8"/><path d="M6.500 6 L12.500 13" stroke="#2848c0" stroke-width="1.800"/><path d="M5 12 L11.500 2.500 L13 3.500 L6.500 13 Z" fill="#f0e040" stroke="#806000" stroke-width="0.700"/><path d="M11 2 L12.500 0.800 L13.800 2 L13 3.500 Z" fill="#e02020"/><path d="M2 14.500 H13 L15 12" fill="none" stroke="#000" stroke-width="1"/></svg>
<svg style="left:590px;top:347px" width="16" height="16"><circle cx="4.500" cy="4" r="2.800" fill="#a8e8f0" stroke="#4090a8"/><path d="M6.500 6 L12.500 13" stroke="#2848c0" stroke-width="1.800"/><path d="M5 12 L11.500 2.500 L13 3.500 L6.500 13 Z" fill="#f0e040" stroke="#806000" stroke-width="0.700"/><path d="M11 2 L12.500 0.800 L13.800 2 L13 3.500 Z" fill="#e02020"/><path d="M2 14.500 H13 L15 12" fill="none" stroke="#000" stroke-width="1"/></svg>
</div></body></html>
